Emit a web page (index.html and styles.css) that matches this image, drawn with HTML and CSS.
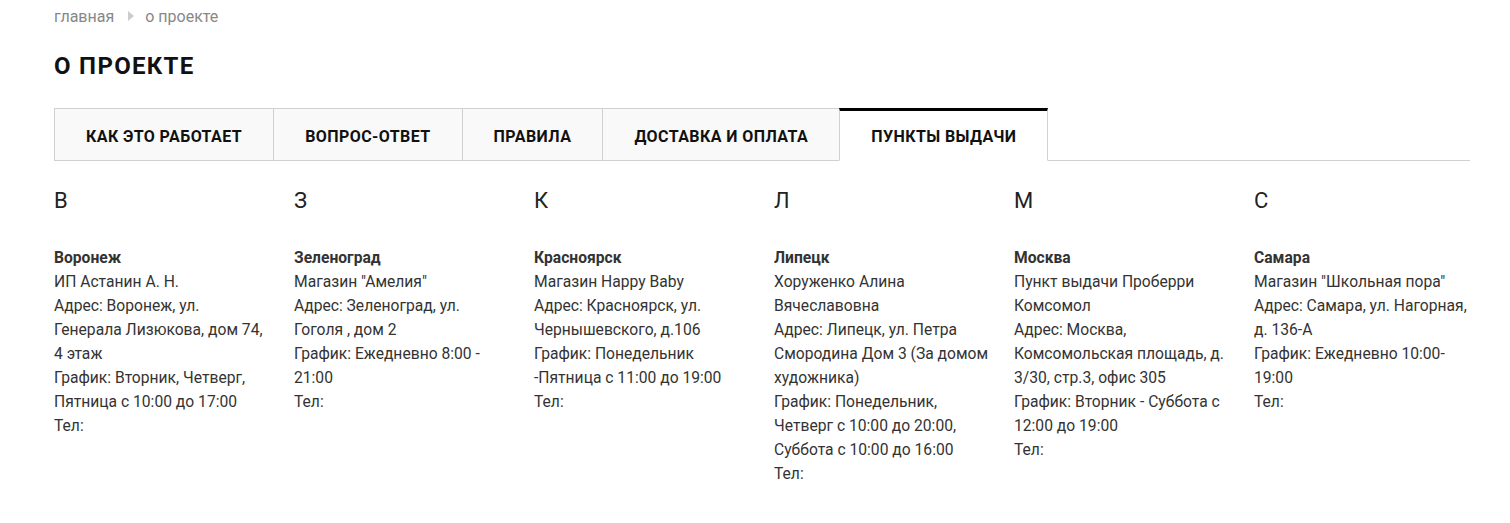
FILE: index.html
```html
<!DOCTYPE html>
<html lang="ru">
<head>
<meta charset="utf-8">
<title>О проекте</title>
<link rel="stylesheet" href="styles.css">
</head>
<body>
<div class="container">
  <nav class="breadcrumbs">
    <a href="#" class="crumb">главная</a>
    <span class="sep"></span>
    <span class="crumb">о проекте</span>
  </nav>
  <h1 class="title">О ПРОЕКТЕ</h1>
  <ul class="tabs">
    <li class="tab">КАК ЭТО РАБОТАЕТ</li>
    <li class="tab">ВОПРОС-ОТВЕТ</li>
    <li class="tab">ПРАВИЛА</li>
    <li class="tab">ДОСТАВКА И ОПЛАТА</li>
    <li class="tab active">ПУНКТЫ ВЫДАЧИ</li>
  </ul>
  <div class="points">
    <div class="col">
      <div class="letter">В</div>
      <div class="item">
        <div class="city">Воронеж</div>
        <div>ИП Астанин А. Н.</div>
        <div>Адрес: Воронеж, ул. Генерала Лизюкова, дом 74, 4 этаж</div>
        <div>График: Вторник, Четверг, Пятница с 10:00 до 17:00</div>
        <div>Тел:</div>
      </div>
    </div>
    <div class="col">
      <div class="letter">З</div>
      <div class="item">
        <div class="city">Зеленоград</div>
        <div>Магазин "Амелия"</div>
        <div>Адрес: Зеленоград, ул. Гоголя , дом 2</div>
        <div>График: Ежедневно 8:00 - 21:00</div>
        <div>Тел:</div>
      </div>
    </div>
    <div class="col">
      <div class="letter">К</div>
      <div class="item">
        <div class="city">Красноярск</div>
        <div>Магазин Happy Baby</div>
        <div>Адрес: Красноярск, ул. Чернышевского, д.106</div>
        <div>График: Понедельник -Пятница с 11:00 до 19:00</div>
        <div>Тел:</div>
      </div>
    </div>
    <div class="col">
      <div class="letter">Л</div>
      <div class="item">
        <div class="city">Липецк</div>
        <div>Хоруженко Алина Вячеславовна</div>
        <div>Адрес: Липецк, ул. Петра Смородина Дом 3 (За домом художника)</div>
        <div>График: Понедельник, Четверг с 10:00 до 20:00, Суббота с 10:00 до 16:00</div>
        <div>Тел:</div>
      </div>
    </div>
    <div class="col">
      <div class="letter">М</div>
      <div class="item">
        <div class="city">Москва</div>
        <div>Пункт выдачи Проберри Комсомол</div>
        <div>Адрес: Москва, Комсомольская площадь, д. 3/30, стр.3, офис 305</div>
        <div>График: Вторник - Суббота с 12:00 до 19:00</div>
        <div>Тел:</div>
      </div>
    </div>
    <div class="col">
      <div class="letter">С</div>
      <div class="item">
        <div class="city">Самара</div>
        <div>Магазин "Школьная пора"</div>
        <div>Адрес: Самара, ул. Нагорная, д. 136-А</div>
        <div>График: Ежедневно 10:00-19:00</div>
        <div>Тел:</div>
      </div>
    </div>
  </div>
</div>
</body>
</html>
```
FILE: styles.css
```css
* { box-sizing: border-box; }
html, body { margin: 0; padding: 0; background: #fff; }
body {
  font-family: Roboto, "Liberation Sans", Arial, sans-serif;
  color: #333;
  font-size: 16px;
}
.container {
  width: 1416px;
  margin-left: 54px;
}
.breadcrumbs {
  display: flex;
  align-items: center;
  height: 32px;
  font-size: 16px;
  color: #888;
}
.crumb { color: #888; text-decoration: none; }
.sep {
  width: 0; height: 0;
  border-top: 5px solid transparent;
  border-bottom: 5px solid transparent;
  border-left: 6px solid #ccc;
  margin: 0 11px 0 14px;
}
.title {
  margin: 18px 0 0;
  font-size: 24px;
  font-weight: 700;
  letter-spacing: 1.3px;
  color: #111;
  line-height: 32px;
  height: 58px;
}
.tabs {
  list-style: none;
  margin: 0;
  padding: 0;
  display: flex;
  border-bottom: 1px solid #d0d0d0;
  height: 53px;
}
.tab {
  height: 53px;
  padding: 4px 31px 0;
  display: flex;
  align-items: center;
  font-size: 16px;
  font-weight: 700;
  letter-spacing: 0.42px;
  color: #111;
  background: #f9f9f9;
  border: 1px solid #d0d0d0;
  border-left: none;
}
.tab:first-child { border-left: 1px solid #d0d0d0; }
.tab.active {
  background: #fff;
  border-top: 3px solid #000;
  border-left: 1px solid #d0d0d0;
  border-bottom: 1px solid #fff;
  padding-top: 2px;
  margin-left: -1px;
}
.points {
  display: grid;
  grid-template-columns: repeat(6, 216px);
  column-gap: 24px;
  padding-top: 27px;
}
.letter {
  font-size: 22px;
  line-height: 26px;
  color: #222;
  margin-bottom: 32px;
}
.item {
  font-size: 15.65px;
  line-height: 24px;
  color: #333;
}
.city { font-weight: 700; }
```
